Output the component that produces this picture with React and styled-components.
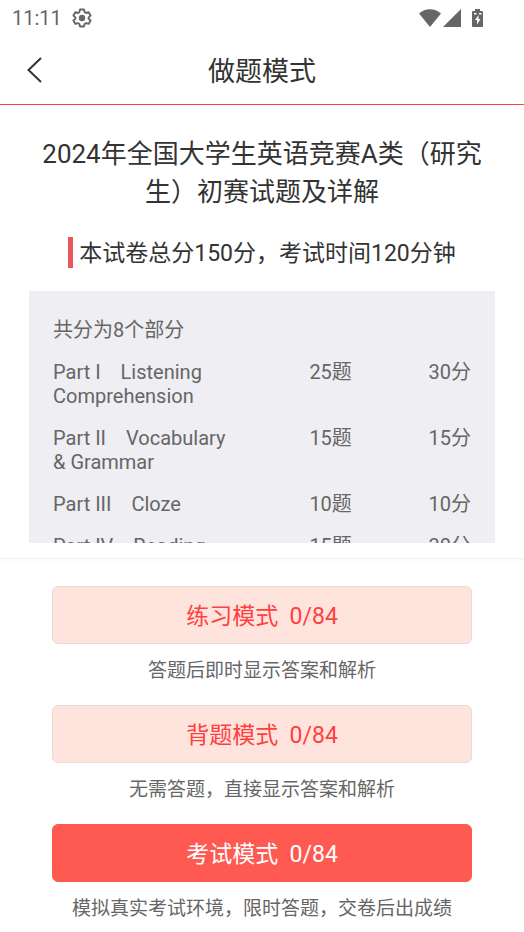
import React from 'react';
import styled, { createGlobalStyle } from 'styled-components';

const GlobalStyle = createGlobalStyle`
    * {
        box-sizing: border-box;
    }
    body {
        margin: 0;
        background: #fff;
        color: #333;
        font-family: Roboto, 'Noto Sans CJK SC', sans-serif;
    }
`;

const Page = styled.div`
    display: flex;
    flex-direction: column;
    height: 100vh;
`;

const StatusBar = styled.div`
    display: flex;
    flex-shrink: 0;
    align-items: center;
    height: 36px;
    padding: 0 40px 0 12px;
    color: #666;
`;

const Time = styled.span`
    margin-right: 10px;
    font-size: 20px;
    line-height: 36px;
    font-weight: 400;
`;

const StatusIcons = styled.div`
    display: flex;
    align-items: center;
    gap: 2px;
    margin-left: auto;
`;

const Header = styled.header`
    display: grid;
    grid-template-columns: 68px 1fr 68px;
    flex-shrink: 0;
    align-items: center;
    height: 69px;
    border-bottom: 1px solid #ff4040;
`;

const BackButton = styled.button`
    display: flex;
    align-items: center;
    justify-content: center;
    height: 68px;
    padding: 0;
    border: 0;
    background: none;
    color: #333;
`;

const HeaderTitle = styled.h1`
    margin: 0;
    padding-top: 4px;
    font-size: 27px;
    line-height: 38px;
    font-weight: 400;
    text-align: center;
`;

const Main = styled.main`
    display: flex;
    flex-direction: column;
    flex: 1;
    align-items: center;
    min-height: 0;
    padding: 30px 29px 15px;
`;

const PaperTitle = styled.h2`
    margin: 0;
    font-size: 26px;
    line-height: 38px;
    font-weight: 400;
    text-align: center;
`;

const Summary = styled.p`
    margin: 26px 0 23px;
    padding: 2px 0 0 6px;
    border-left: 5px solid #e85858;
    font-size: 23px;
    line-height: 29px;
`;

const Sections = styled.div`
    flex: 1;
    width: 100%;
    min-height: 0;
    padding: 18px 24px;
    overflow-y: auto;
    scrollbar-width: none;
    background: #efeef3;
    color: #666;
`;

const SectionTable = styled.table`
    width: 100%;
    border-collapse: collapse;
    table-layout: fixed;
    font-size: 20px;
    line-height: 24px;
    text-align: left;
`;

const Caption = styled.caption`
    padding: 9px 0;
    text-align: left;
`;

const SectionName = styled.th`
    width: 43%;
    padding: 9px 0;
    font-weight: 400;
    vertical-align: top;
`;

const Amount = styled.td`
    padding: 9px 0;
    text-align: right;
    vertical-align: top;
`;

const Footer = styled.footer`
    display: flex;
    flex-direction: column;
    flex-shrink: 0;
    gap: 12px;
    padding: 27px 10% 1px;
    border-top: 1px solid #f2f2f2;
    box-shadow: inset 0 2px 2px rgba(0, 0, 0, 0.02);
`;

const ModeButton = styled.button`
    display: block;
    width: 100%;
    height: 58px;
    padding: 4px 0 0;
    border: 1px solid ${props => (props.$primary ? '#ff5a52' : '#eed8d6')};
    border-radius: 6px;
    background: ${props => (props.$primary ? '#ff5a52' : '#ffe4dd')};
    color: ${props => (props.$primary ? '#fff' : '#ff4040')};
    font-family: inherit;
    font-size: 23px;
    line-height: 32px;
    white-space: pre;
`;

const ModeHint = styled.p`
    margin: 0;
    padding-top: 5px;
    color: #666;
    font-size: 19px;
    line-height: 44px;
    text-align: center;
`;

const sections = [
    { name: 'Part I\u3000Listening Comprehension', count: 25, score: 30 },
    { name: 'Part II\u3000Vocabulary & Grammar', count: 15, score: 15 },
    { name: 'Part III\u3000Cloze', count: 10, score: 10 },
    { name: 'Part IV\u3000Reading Comprehension', count: 15, score: 30 },
];

const modes = [
    { name: '练习模式', hint: '答题后即时显示答案和解析' },
    { name: '背题模式', hint: '无需答题，直接显示答案和解析' },
    { name: '考试模式', hint: '模拟真实考试环境，限时答题，交卷后出成绩', primary: true },
];

const GearIcon = () => (
    <svg width="20" height="20" viewBox="0 0 20 20" fill="none" aria-hidden="true">
        <path
            d="M8 1.5h4l.6 2.6 1.500.9 2.500-.8 2 3.400-2 1.800v1.300l2 1.800-2 3.400-2.500-.8-1.500.9-.6 2.500H8L7.400 16l-1.500-.9-2.500.8-2-3.400 2-1.800V9.400l-2-1.800 2-3.400 2.500.8 1.500-.9z"
            stroke="currentColor"
            strokeWidth="1.9"
            strokeLinejoin="round"
        />
        <circle cx="10" cy="10" r="3.2" fill="currentColor" />
    </svg>
);

const WifiIcon = () => (
    <svg width="22" height="18" viewBox="0 0 22 18" aria-hidden="true">
        <path d="M0 4.5C6-1.2 16-1.2 22 4.5L11 18z" fill="currentColor" />
    </svg>
);

const SignalIcon = () => (
    <svg width="18" height="18" viewBox="0 0 18 18" aria-hidden="true">
        <path d="M18 0v18H0z" fill="currentColor" />
    </svg>
);

const BatteryIcon = () => (
    <svg width="21" height="19" viewBox="-9 0 21 19" aria-hidden="true">
        <path
            d="M3 0h5v2h2q1 0 1 1v14q0 1-1 1H1q-1 0-1-1V3q0-1 1-1h2z"
            fill="currentColor"
        />
        <path d="M6.500 6L3 11h2v4.500L8.500 10h-2z" fill="#fff" />
        <path d="M2 4h2.500v1.500H2zM7 4h2.500v1.500H7z" fill="#fff" />
    </svg>
);

const BackIcon = () => (
    <svg width="16" height="26" viewBox="0 0 16 26" fill="none" aria-hidden="true">
        <path d="M15 1L2.500 13 15 25" stroke="currentColor" strokeWidth="2" />
    </svg>
);

const App = () => {
    return (
        <Page>
            <GlobalStyle />
            <StatusBar>
                <Time>11:11</Time>
                <GearIcon />
                <StatusIcons>
                    <WifiIcon />
                    <SignalIcon />
                    <BatteryIcon />
                </StatusIcons>
            </StatusBar>
            <Header>
                <BackButton type="button" aria-label="返回"><BackIcon /></BackButton>
                <HeaderTitle>做题模式</HeaderTitle>
            </Header>
            <Main>
                <PaperTitle>2024年全国大学生英语竞赛A类（研究生）初赛试题及详解</PaperTitle>
                <Summary>本试卷总分150分，考试时间120分钟</Summary>
                <Sections>
                    <SectionTable>
                        <Caption>共分为8个部分</Caption>
                        <tbody>
                            {sections.map(section => (
                                <tr key={section.name}>
                                    <SectionName scope="row">{section.name}</SectionName>
                                    <Amount>{section.count}题</Amount>
                                    <Amount>{section.score}分</Amount>
                                </tr>
                            ))}
                        </tbody>
                    </SectionTable>
                </Sections>
            </Main>
            <Footer>
                {modes.map(mode => (
                    <div key={mode.name}>
                        <ModeButton type="button" $primary={mode.primary}>{mode.name}{'  '}0/84</ModeButton>
                        <ModeHint>{mode.hint}</ModeHint>
                    </div>
                ))}
            </Footer>
        </Page>
    );
};

export default App;
